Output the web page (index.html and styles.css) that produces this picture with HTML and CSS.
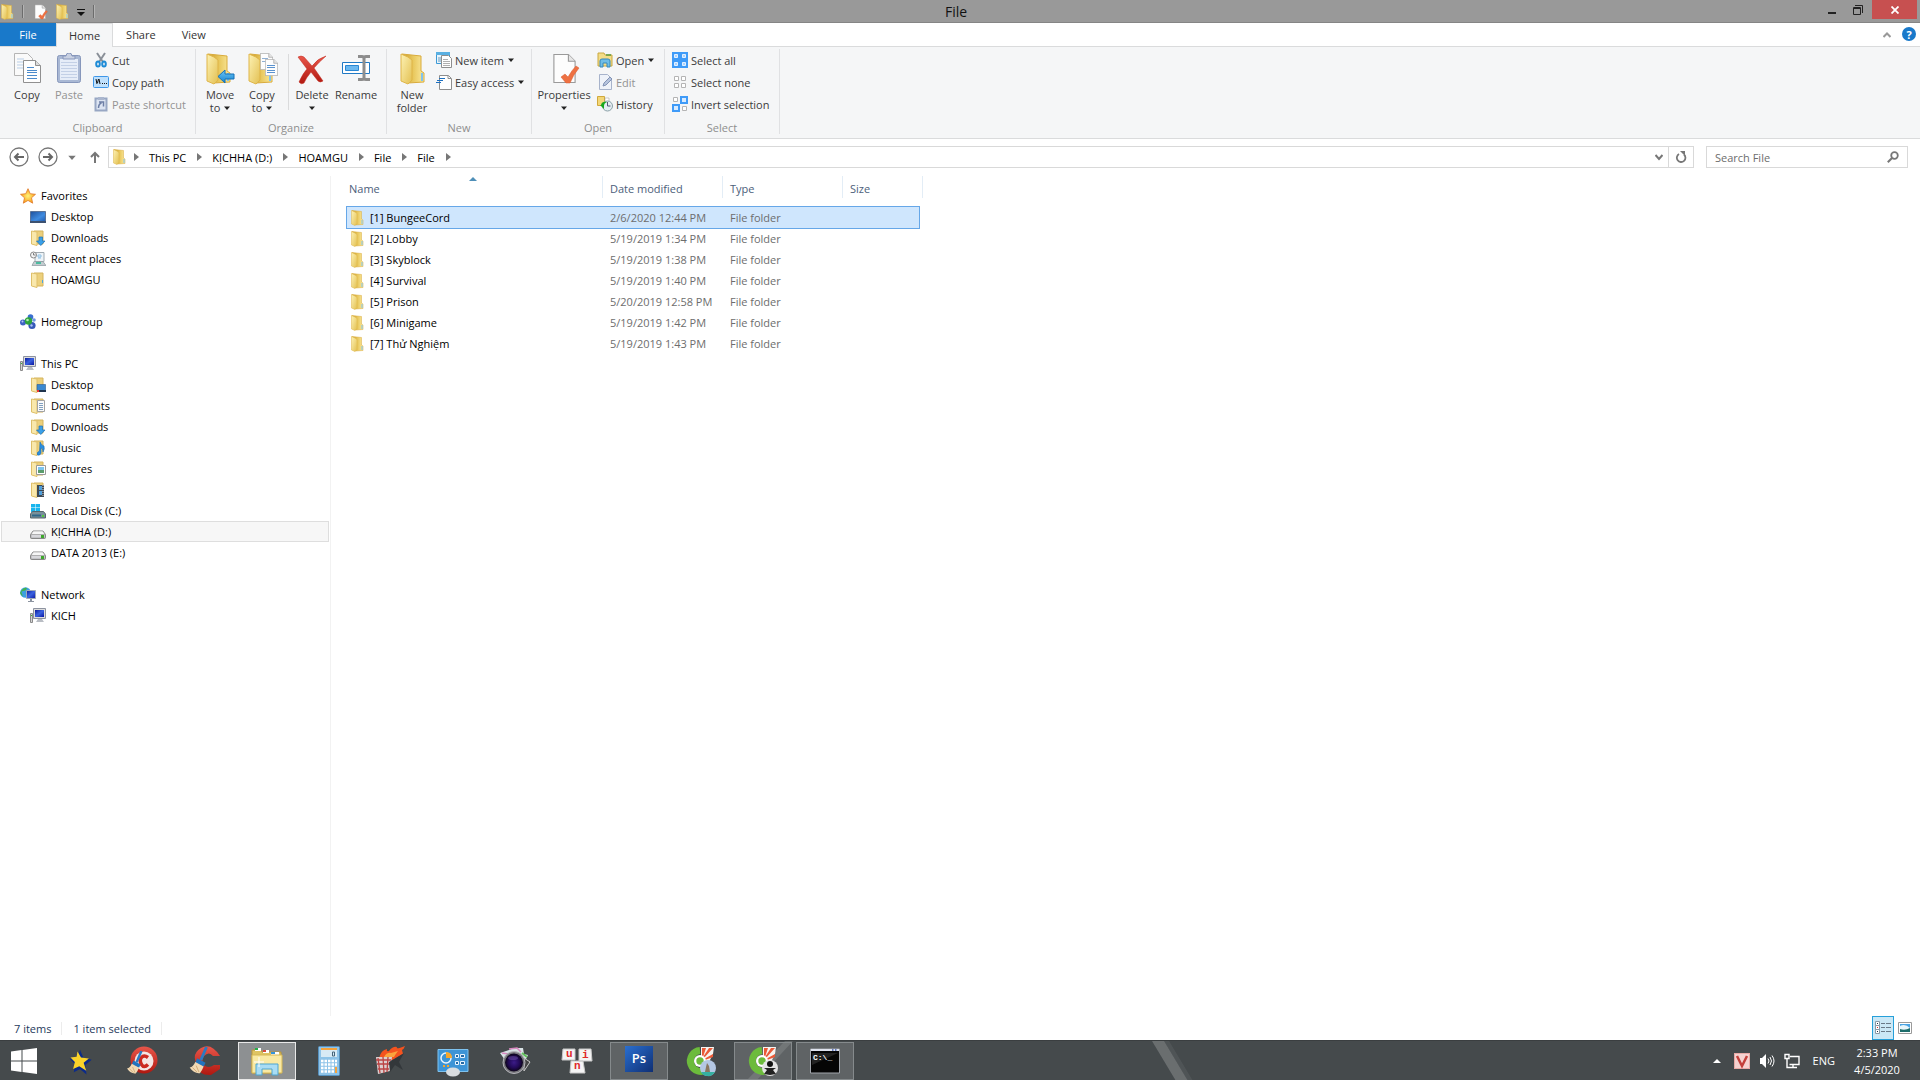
FILE: index.html
```html
<!DOCTYPE html>
<html lang="en">
<head>
<meta charset="utf-8">
<title>File</title>
<link rel="stylesheet" href="styles.css">
</head>
<body>
<svg class="sprite" width="0" height="0" aria-hidden="true">
  <defs>
    <linearGradient id="gFront" x1="0" y1="0" x2="1" y2="1"><stop offset="0" stop-color="#fdf2b4"/><stop offset="1" stop-color="#e3c052"/></linearGradient>
    <linearGradient id="gBack" x1="0" y1="0" x2="1" y2="0"><stop offset="0" stop-color="#c99a28"/><stop offset=".5" stop-color="#e8c75c"/><stop offset="1" stop-color="#fbe99c"/></linearGradient>
    <linearGradient id="gBlue" x1="0" y1="0" x2="0" y2="1"><stop offset="0" stop-color="#6cc6f5"/><stop offset="1" stop-color="#1583d0"/></linearGradient>
    <linearGradient id="gScreen" x1="0" y1="0" x2="1" y2="1"><stop offset="0" stop-color="#0a1a9c"/><stop offset=".5" stop-color="#3a62e0"/><stop offset="1" stop-color="#0b16a0"/></linearGradient>
    <linearGradient id="gDesk" x1="0" y1="0" x2="1" y2="1"><stop offset="0" stop-color="#1d4f9c"/><stop offset=".6" stop-color="#3f8be0"/><stop offset="1" stop-color="#1f5bb0"/></linearGradient>
    <linearGradient id="gGrey" x1="0" y1="0" x2="0" y2="1"><stop offset="0" stop-color="#f4f4f4"/><stop offset="1" stop-color="#a9a9a9"/></linearGradient>
    <linearGradient id="gRed" x1="0" y1="0" x2="0" y2="1"><stop offset="0" stop-color="#e8564a"/><stop offset="1" stop-color="#b01810"/></linearGradient>
    <linearGradient id="gPs" x1="0" y1="0" x2="1" y2="1"><stop offset="0" stop-color="#2a6fd0"/><stop offset="1" stop-color="#0f2f74"/></linearGradient>
    <radialGradient id="gLens"><stop offset="0" stop-color="#3c1c88"/><stop offset=".6" stop-color="#220a58"/><stop offset="1" stop-color="#0c0418"/></radialGradient>
    <radialGradient id="gStar"><stop offset="0" stop-color="#fff27a"/><stop offset="1" stop-color="#f9a01b"/></radialGradient>

    <symbol id="folder" viewBox="0 0 26 32">
      <path d="M2 1 21 3V18l3 2v9L8 30z" fill="url(#gBack)" stroke="#d9ab3c"/>
      <path d="M21 20h2v8h-2z" fill="#7fc3f0"/>
      <path d="M1 1 8 4l4 3v20l-4 4-7-3z" fill="url(#gFront)" stroke="#dfb548"/>
    </symbol>
    <symbol id="subfolder" viewBox="0 0 16 16">
      <path d="M4 1h9v13H4z" fill="#ecd07c" stroke="#d5b45c"/>
      <path d="M1.500 1 7 2v13.500L1.500 14z" fill="#f9e8ac" stroke="#dfc06a"/>
    </symbol>
    <symbol id="page" viewBox="0 0 20 26">
      <path d="M.5.5h13l6 6v19H.5z" fill="#fdfdfd" stroke="#9a9a9a"/><path d="M13.500.5v6h6" fill="#e6e6e6" stroke="#9a9a9a"/>
    </symbol>
    <symbol id="caret" viewBox="0 0 6 4"><path d="M0 .5h6L3 4z"/></symbol>
    <symbol id="crumb" viewBox="0 0 5 8"><path d="M0 0v8l5-4z" fill="#777"/></symbol>

    <symbol id="i-copy" viewBox="0 0 32 32">
      <path d="M3.500.5h13l5 5v17h-18z" fill="#fafafa" stroke="#b5b5b5"/>
      <path d="M6 6h7M6 9h6M6 12h6M6 15h6" stroke="#b9cfe8"/>
      <path d="M12.500 7.500h12l5 5v17h-17z" fill="#fefefe" stroke="#909090"/><path d="M24.500 7.500v5h5" fill="#ddd" stroke="#909090"/>
      <path d="M16 14.500h7M16 17.500h10M16 19.500h10M16 22.500h10M16 25.500h10" stroke="#4b8acb"/>
    </symbol>
    <symbol id="i-paste" viewBox="0 0 32 32">
      <rect x="4.500" y="2.500" width="23" height="27" rx="2" fill="#a9b8d4" stroke="#8797bb"/>
      <path d="M7 6h18v21H7z" fill="#e6edf8"/><path d="M8 9.500h16M8 12.500h16M8 15.500h16M8 18.500h16M8 21.500h16M8 24.500h16" stroke="#c3d0e6"/>
      <path d="M10 6V3h3q0-3 3-3t3 3h3v3z" fill="#c9d1e2" stroke="#8797bb"/>
    </symbol>
    <symbol id="i-move" viewBox="0 0 32 32">
      <use href="#folder" width="26" height="32" x="2"/>
      <path d="M14 23.500 21 17v4h9v5h-9v4z" fill="url(#gBlue)" stroke="#1470b8"/>
    </symbol>
    <symbol id="i-copyto" viewBox="0 0 32 32">
      <use href="#folder" width="26" height="32" x="2"/>
      <use href="#page" x="14" y="0" width="13" height="17"/><path d="M16 5.500h6M16 8.500h5" stroke="#8fb0d4"/>
      <use href="#page" x="19" y="6" width="13" height="17"/><path d="M21 12.500h8M21 14.500h8M21 17.500h8M21 19.500h8" stroke="#5b93cf"/>
    </symbol>
    <symbol id="i-delete" viewBox="0 0 32 32">
      <path d="M2 4q3-2 6 0l8 9Q22 5 30 3 23 9 18 15l9 13q-3 2-5 0l-7-9q-5 6-7 11-3 2-5-1 4-9 8-13z" fill="url(#gRed)" stroke="#c0281c" stroke-width=".5"/>
    </symbol>
    <symbol id="i-rename" viewBox="0 0 32 32">
      <path d="M2.500 9.500h27v11h-27z" fill="#fff" stroke="#2079c4"/><path d="M5.500 12.500h13v5h-13z" fill="#6bb8f0" stroke="#2a86d2"/>
      <path d="M18 3.500h4q2 0 2 2v19q0 2 2 2h4M30 3.500h-4q-2 0-2 2M24 24.500q0 2-2 2h-4" fill="none" stroke="#8d8d8d" stroke-width="3"/>
    </symbol>
    <symbol id="i-newfolder" viewBox="0 0 32 32"><use href="#folder" width="26" height="32" x="4"/></symbol>
    <symbol id="i-props" viewBox="0 0 32 32">
      <use href="#page" x="5" y="1" width="23" height="29"/>
      <path d="M13 24l4-3 3 3q4-7 8-11l3 2q-6 7-9 15h-4z" fill="#ee7142" stroke="#d85a30" stroke-width=".5"/>
    </symbol>
    <symbol id="i-cut" viewBox="0 0 16 16">
      <path d="M4 1l6 9M12 1 6 10" stroke="#8a9098" stroke-width="2"/>
      <ellipse cx="5" cy="12" rx="1.800" ry="2.500" fill="none" stroke="#1e8bd6" stroke-width="2"/><ellipse cx="11" cy="12" rx="1.800" ry="2.500" fill="none" stroke="#1e8bd6" stroke-width="2"/>
    </symbol>
    <symbol id="i-path" viewBox="0 0 16 16">
      <rect x=".5" y="2.500" width="15" height="11" rx="1" fill="#bfe0fc" stroke="#3f97e8"/><path d="M3 5l1 5M6 5l1 5M4.500 9l1-4" stroke="#111" fill="none"/><path d="M9 9h1v1H9zM11 9h1v1h-1zM13 9h1v1h-1z" fill="#111"/>
    </symbol>
    <symbol id="i-shortcut" viewBox="0 0 16 16">
      <path d="M2.500 2.500h11v12h-11z" fill="#dce4f2" stroke="#98a7c4" stroke-width="2"/><path d="M5 1h6v3H5z" fill="#aab6ce"/><path d="M5.500 12q0-4 3-5M6 6h4.500v4.500" fill="none" stroke="#6d7fa6" stroke-width="1.500"/>
    </symbol>
    <symbol id="i-newitem" viewBox="0 0 16 16">
      <path d="M.5.5h13v11H.5z" fill="#e8f4fc" stroke="#3c9ad6"/><path d="M0 0h14v3H0z" fill="#5ab0e2"/><path d="M2 5h3v5H2z" fill="#a9c8dc"/>
      <path d="M5.500 3.500h7l3 3v9h-10z" fill="#fff" stroke="#8e8e8e"/><path d="M7 7.500h5M7 9.500h7M7 11.500h7M7 13.500h7" stroke="#b0b0b0"/>
    </symbol>
    <symbol id="i-easy" viewBox="0 0 16 16">
      <path d="M3.500 1.500h9l3 3v11h-12z" fill="#fff" stroke="#8e8e8e"/><path d="M12 1.500v3h3" fill="none" stroke="#8e8e8e"/><path d="M3 4.500h6M1 6.500h6M0 8.500h5" stroke="#1c6fc0"/>
    </symbol>
    <symbol id="i-open" viewBox="0 0 16 16">
      <path d="M1 1h6l1 2h7v11H1z" fill="#f3dc86" stroke="#c9a840"/><path d="M9 3h5" stroke="#5a9a40" stroke-width="1.500"/>
      <path d="M3 15V9q0-2 2-2h6q2 0 2 2v6h-3v-4H6v4z" fill="#6fbde6" stroke="#3488bc"/>
    </symbol>
    <symbol id="i-edit" viewBox="0 0 16 16">
      <path d="M2.500.5h8l4 4v11h-12z" fill="#eef2f9" stroke="#a7b3cb"/><path d="M6 12l1-3 6-6 2 2-6 6z" fill="#b5c3dd" stroke="#8293b6"/>
    </symbol>
    <symbol id="i-history" viewBox="0 0 16 16">
      <path d="M.5.5h7v9h-7z" fill="#f3d778" stroke="#d0a83c"/><path d="M8 2h4v4H8z" fill="#fff" stroke="#999" stroke-width=".5"/>
      <circle cx="10.500" cy="10" r="5" fill="#e4eef2" stroke="#8aa0a8"/><path d="M10.500 6v4h3" fill="none" stroke="#557"/>
      <path d="M3 9l4 4v-3q0-3 3-4-5-1-6 3z" fill="#18a81e"/>
    </symbol>
    <symbol id="i-all" viewBox="0 0 16 16">
      <path d="M0 0h16v16H0z" fill="#3f9bf8"/><path d="M2.500 2.500h3v3h-3zM10.500 2.500h3v3h-3zM2.500 10.500h3v3h-3zM10.500 10.500h3v3h-3z" fill="#a9d2ff" stroke="#e4f1ff"/>
    </symbol>
    <symbol id="i-none" viewBox="0 0 16 16">
      <path d="M2.500 2.500h4v4h-4zM9.500 2.500h4v4h-4zM2.500 9.500h4v4h-4zM9.500 9.500h4v4h-4z" fill="#fff" stroke="#b4b4b4"/>
    </symbol>
    <symbol id="i-invert" viewBox="0 0 16 16">
      <path d="M1.500 1.500h4v4h-4zM10.500 10.500h4v4h-4z" fill="#fff" stroke="#b4b4b4"/><path d="M9 1h6v6H9zM1 9h6v6H1z" fill="#d8ebff" stroke="#3f9bf8" stroke-width="2"/>
    </symbol>

    <symbol id="n-star" viewBox="0 0 16 16"><path d="M8 .7l2.200 5 5.300.6-4 3.500 1.200 5.400L8 12.400l-4.700 2.800 1.200-5.400-4-3.500 5.300-.6z" fill="url(#gStar)" stroke="#e0782a" stroke-width=".8"/></symbol>
    <symbol id="n-desktop" viewBox="0 0 16 16"><path d="M.5 2.500h15v10H.5z" fill="url(#gDesk)" stroke="#5b7398"/><path d="M0 12h16v2H0z" fill="#3c5170"/></symbol>
    <symbol id="n-down" viewBox="0 0 16 16"><use href="#subfolder" width="16" height="16"/><path d="M9 7h3.500v4H15l-4.200 4.500L6.500 11H9z" fill="#3aa0e8" stroke="#1f70b4" stroke-width=".7"/></symbol>
    <symbol id="n-recent" viewBox="0 0 16 16"><path d="M5 1.500h9v9H5z" fill="#eef4f8" stroke="#a0aab0"/><path d="M8 4h3v2H8zM8 7h3" fill="none" stroke="#8fc0e4"/><path d="M2 14.500l2-4h9l3 4z" fill="#c3ccd0" stroke="#8b979c" stroke-width=".7"/><path d="M6 11h5v2H6z" fill="#4dbca0"/><circle cx="3.500" cy="4" r="3" fill="#f4f4f4" stroke="#888"/><path d="M3.500 2v2h2" fill="none" stroke="#555" stroke-width=".7"/></symbol>
    <symbol id="n-folder" viewBox="0 0 16 16"><use href="#subfolder" width="16" height="16"/><path d="M12 8h1v3h-1z" fill="#4aa7e0"/></symbol>
    <symbol id="n-home" viewBox="0 0 16 16"><circle cx="10.500" cy="3" r="2.800" fill="#3a6fd0"/><circle cx="3" cy="8.500" r="3" fill="#3f62c4"/><circle cx="12" cy="11.500" r="3.600" fill="#3558b8"/><circle cx="14" cy="6" r="1.800" fill="#6f97e0"/><circle cx="8.500" cy="7" r="3.700" fill="#2ea53c"/><circle cx="7.500" cy="6" r="1.300" fill="#b4ecb4"/><circle cx="2.500" cy="7.500" r="1" fill="#b5c8f5"/><circle cx="11.500" cy="11.500" r="1.200" fill="#a8c0f0"/></symbol>
    <symbol id="n-pc" viewBox="0 0 16 16"><path d="M3.500.5h12v10h-12z" fill="#ddd" stroke="#8d93a0"/><path d="M5 2h9v7H5z" fill="url(#gScreen)"/><path d="M8 11h4l2 3H6z" fill="#b9bdc4"/><path d="M.5 5.500h2v9h-2z" fill="#d5d5d5" stroke="#8a8a8a"/><path d="M1 7h1v1H1z" fill="#3b3"/></symbol>
    <symbol id="n-fdesk" viewBox="0 0 16 16"><use href="#subfolder" width="16" height="16"/><path d="M7 7.500h8.500v6H7z" fill="#3a88d0" stroke="#2a5a90" stroke-width=".6"/><path d="M7 13h9v2H7z" fill="#20344c"/><path d="M7 13h2v2H7z" fill="#e33"/></symbol>
    <symbol id="n-docs" viewBox="0 0 16 16"><use href="#subfolder" width="16" height="16"/><path d="M7.500 2.500h7v11h-7z" fill="#fafafa" stroke="#a3a3a3"/><path d="M9 5.500h4M9 7.500h4M9 9.500h4M9 11.500h4" stroke="#7f9fc0"/></symbol>
    <symbol id="n-music" viewBox="0 0 16 16"><use href="#subfolder" width="16" height="16"/><path d="M10 2q1 3 4 4 1 3-1 6 0-4-2-4v5q-1 3-3.500 2-1-3 2-4z" fill="#2a8ee0" stroke="#1b6db4" stroke-width=".6"/></symbol>
    <symbol id="n-pics" viewBox="0 0 16 16"><use href="#subfolder" width="16" height="16"/><path d="M6.500 4.500h9v9h-9z" fill="#fff" stroke="#9a9a9a"/><path d="M8 6h6v3H8z" fill="#7cc4ee"/><path d="M8 9h6v3H8z" fill="#5b9c6c"/></symbol>
    <symbol id="n-video" viewBox="0 0 16 16"><use href="#subfolder" width="16" height="16"/><path d="M7 3h7v12H7z" fill="#3d4854"/><path d="M9 4h3v4H9zM9 9h3v4H9z" fill="#4f9fdc"/><path d="M13 3v12" stroke="#ddd" stroke-dasharray="1"/></symbol>
    <symbol id="n-cdrive" viewBox="0 0 16 16"><path d="M1 1h4v3.500H1zM5.500 1H10v3.500H5.500zM1 5h4v4H1zM5.500 5H10v4H5.500z" fill="#17b5ee"/><path d="M.5 11l2-2.500h11l2 2.500v4H.5z" fill="#78909a" stroke="#56656c"/><path d="M2 11.500h9v2H2z" fill="#2f6688"/><path d="M12 12h2v2h-2z" fill="#50c83c"/></symbol>
    <symbol id="n-drive" viewBox="0 0 16 16"><path d="M.5 10.500 3 7h10l2.500 3.500v3q0 1-1 1h-13q-1 0-1-1z" fill="url(#gGrey)" stroke="#888"/><path d="M3.500 7.500h9l1.500 2.500H2z" fill="#f6f6f6"/><path d="M1 10.500h14v3.500H1z" fill="#d8d8dc" stroke="#888" stroke-width=".5"/><path d="M11 11h3v3h-3z" fill="#3ea82c"/></symbol>
    <symbol id="n-net" viewBox="0 0 16 16"><circle cx="5.500" cy="5.500" r="5.300" fill="#3d9fe0"/><path d="M1 4q3-4 6-3-1 3-4 3t0 5q-2 0-3-3zM6 5l3 1v4l-3 1z" fill="#44b449"/><path d="M6.500 3.500h9v8h-9z" fill="url(#gScreen)" stroke="#a0aab8"/><path d="M10 12h2v2h2v1H8v-1h2z" fill="#8c94a0"/></symbol>

    <symbol id="t-win" viewBox="0 0 32 32"><path d="M3 6.500 13.500 5v10.500H3zM14.500 4.900 29 3v12.500H14.500zM3 16.500h10.500V27L3 25.500zM14.500 16.500H29V29l-14.500-1.900z" fill="#fff"/></symbol>
    <symbol id="t-star" viewBox="0 0 32 32"><path d="M15 6l3 7 8 2-6 5 1 9-6-5-6 3 1-8-5-5 8-2z" fill="#0b2b8a" stroke="#0b2b8a" stroke-width="2"/><path d="M12 5l4 7 9 1-6 5 3 9-8-5-7 3 2-8-5-5 7-1z" fill="#fbd32a"/></symbol>
    <symbol id="broom" viewBox="0 0 20 30"><path d="M18 0l-6 14" stroke="#2a7bc4" stroke-width="3"/><path d="M8 12l9 5-2 4-9-4z" fill="#2373be"/><path d="M6 16l9 5q-2 5-4 7-6 1-11-6 4-1 6-6z" fill="#f1d9b4"/><path d="M3 22l5 5M7 20l3 7" stroke="#cfa974"/></symbol>
    <symbol id="t-cc1" viewBox="0 0 32 32"><circle cx="17" cy="15" r="13.500" fill="url(#gRed)"/><circle cx="17" cy="16" r="9.500" fill="#f4e6e4"/><path d="M21 12.500q-4-3-6.500 0t0 7 6.500 0" fill="none" stroke="#cc2a20" stroke-width="3.500"/><use href="#broom" x="0" y="6" width="16" height="24"/></symbol>
    <symbol id="t-cc2" viewBox="0 0 32 32"><path d="M31 11Q22-3 12 3T8 20q2 11 14 10l9-6v-4h-6q-6 4-10 0-3-5 0-9 5-5 9 0h7z" fill="url(#gRed)"/><use href="#broom" x="0" y="2" width="20" height="28"/></symbol>
    <symbol id="t-explorer" viewBox="0 0 32 32"><path d="M1 5h9l1 2h19v21H1z" fill="#dfc463" stroke="#b9963a"/><path d="M4 3h6v3H4zM12 5h6v3h-6zM20 7h8v3h-8z" fill="#fff"/><path d="M4 3h3v2H4z" fill="#25b04a"/><path d="M12 5h3v2h-3z" fill="#d94b3a"/><path d="M20 7h4v2h-4z" fill="#3392dc"/><path d="M1 10h30v18H1z" fill="#f9e9a4" stroke="#d6b755"/><path d="M5 30V19h22v11h-6v-6H11v6z" fill="#a9dcf4" stroke="#4fa5cf"/><path d="M8 12v10M3 17h10" stroke="#fff"/></symbol>
    <symbol id="t-calc" viewBox="0 0 32 32"><rect x="5.500" y="1.500" width="21" height="29" rx="1" fill="#8ec3e8" stroke="#5590be"/><path d="M8 3h16v2H8z" fill="#f3a23c"/><path d="M8 5h16v7H8z" fill="#d8eaf5"/><path d="M19.500 7h2v4h-2z" fill="none" stroke="#46647a"/><path d="M8 16h16M8 19.500h16M8 23h16M8 26.500h16" stroke="#fff" stroke-width="2.500" stroke-dasharray="2.500 1"/><path d="M22 22h2v6h-2z" fill="#f3a23c"/></symbol>
    <symbol id="t-fire" viewBox="0 0 32 32"><path d="M4 13q2-8 8-9-1 3 2 2 4-5 8-4-2 3 8-1-1 3-3 4l1 4-10 6z" fill="#f4531f"/><path d="M9 12q3-5 7-4l7-2q-3 4-4 6z" fill="#fba33c"/><path d="M1 12h16l-2 14-12 3z" fill="#dccfcf"/><path d="M3 13l2 15M8 12l1 16M13 12l-1 15M1 15h15M2 19h13M3 24h11" stroke="#b44" stroke-width="1.300"/><path d="M14 17l15-9-5 9 4 8-8-5-5 7z" fill="#33373a"/></symbol>
    <symbol id="t-panel" viewBox="0 0 32 32"><path d="M1 4.500h30v22H1z" fill="#3d94d6" stroke="#7ec2ee"/><circle cx="9" cy="13" r="5" fill="none" stroke="#e8f5ff" stroke-width="1.500"/><path d="M9 13V7q6 0 6 6z" fill="#f6a62c"/><path d="M18.500 9.500h3v3h-3zM23.500 9.500h4v3h-4zM18.500 16.500h3v3h-3zM23.500 16.500h4v3h-4z" fill="#2469a4" stroke="#e8f5ff"/><path d="M6 20h2v2H6zM10 20h2v2h-2z" fill="#f6a62c"/><ellipse cx="16" cy="27" rx="7" ry="4.500" fill="#d9dde0"/></symbol>
    <symbol id="t-camera" viewBox="0 0 32 32"><path d="M1 8l9-3 5-2 9 0 1 6 4 1-4 8H8z" fill="#d9e3e6"/><path d="M3 8l6 1M10 4l8-1 4 4" stroke="#d88ac0" stroke-width="1.500" fill="none"/><path d="M23 8l5 4" stroke="#61c05a" stroke-width="2"/><path d="M25 13l6 4-6 9z" fill="#444" stroke="#c8c8c8"/><circle cx="15" cy="17.500" r="11" fill="#77777c" stroke="#b5b5ba"/><circle cx="15" cy="17.500" r="9" fill="url(#gLens)"/><ellipse cx="14" cy="13" rx="5" ry="2" fill="#8563c0" opacity=".4"/></symbol>
    <symbol id="t-uni" viewBox="0 0 32 32"><g fill="#f4f4f4" stroke="#c8c8c8"><path d="M2 4h12v11H1zM18 4h12l1 12H18zM10 16h12l2 12H9z"/></g><g fill="#e02a2a" font-family="Liberation Mono" font-weight="bold" font-size="11"><text x="5" y="12">u</text><text x="21" y="13">i</text><text x="13" y="24">n</text></g></symbol>
    <symbol id="t-ps" viewBox="0 0 32 32"><path d="M2 1h28v26H2z" fill="url(#gPs)"/><text x="16" y="18" fill="#fff" font-family="Open Sans" font-weight="600" font-size="13" text-anchor="middle">Ps</text></symbol>
    <symbol id="coccoc" viewBox="0 0 32 32">
      <path d="M16 2h13l-1 7-4 8-8-2z" fill="#f6f4f0"/>
      <path d="M15 5.500a10.500 10.500 0 1 0 7 19" fill="none" stroke="#6cbb3c" stroke-width="7"/>
      <path d="M17 3h4l-3 9h-1zM28 3l-9 10-1-1 6-9zM28 9v3l-8 3-1-1z" fill="#ea5a38"/>
      <circle cx="15" cy="16" r="6" fill="#fff"/><circle cx="15" cy="16" r="3.700" fill="#6cbb3c"/>
    </symbol>
    <symbol id="t-coc1" viewBox="0 0 32 32"><use href="#coccoc" width="32" height="32"/><circle cx="23" cy="23" r="8" fill="#b4c8e4"/><path d="M16 27h14q-3 5-8 4-4 0-6-4z" fill="#35b0a2"/><path d="M22 18l2 3 1 6h-5l1-5z" fill="#8a7760"/></symbol>
    <symbol id="t-coc2" viewBox="0 0 32 32"><use href="#coccoc" width="32" height="32"/><circle cx="23" cy="23" r="8" fill="#e4e4e4"/><circle cx="23" cy="19" r="3" fill="#111"/><path d="M17 23h12l-3 2 3 4-6 1-6-1 3-4z" fill="#222"/></symbol>
    <symbol id="t-cmd" viewBox="0 0 32 32"><path d="M1.500 4h29v24h-29z" fill="#050505" stroke="#a2a6ac"/><path d="M2 4h28v2H2z" fill="#dfe3ee"/><path d="M23 5h1.500M26 5h1.500" stroke="#3a57b0" stroke-width="1.500"/><path d="M3 8h26L3 20z" fill="#222"/><text x="4" y="15" fill="#fff" font-family="Liberation Mono" font-weight="bold" font-size="8">C:\_</text></symbol>
  </defs>
</svg>

<div class="window">
  <header class="titlebar">
    <div class="quick">
      <svg width="13" height="16"><use href="#folder"/></svg>
      <span class="bar"></span>
      <button aria-label="Properties"><svg width="16" height="16"><use href="#i-props"/></svg></button>
      <button aria-label="New folder"><svg width="13" height="16"><use href="#folder"/></svg></button>
      <button aria-label="Customize"><svg width="8" height="8" viewBox="0 0 8 8"><path d="M0 1h8v1H0zM0 4h8L4 8z" fill="#111"/></svg></button>
      <span class="bar"></span>
    </div>
    <h1>File</h1>
    <div class="controls">
      <button aria-label="Minimize"><svg width="10" height="12"><path d="M1 8h8v2H1z" fill="#222"/></svg></button>
      <button aria-label="Restore"><svg width="12" height="12" viewBox="0 0 12 12"><path d="M1.500 3.500h7v7h-7zM1 4.500h7M3 1.500h7.500V9" fill="none" stroke="#222"/></svg></button>
      <button class="close" aria-label="Close"><svg width="8" height="8" viewBox="0 0 8 8"><path d="M.5.5l7 7M7.500.5l-7 7" stroke="#fff" stroke-width="1.800"/></svg></button>
    </div>
  </header>

  <nav class="tabs">
    <button class="file">File</button>
    <button class="active">Home</button>
    <button>Share</button>
    <button>View</button>
    <span class="spacer"></span>
    <button class="tool" aria-label="Collapse"><svg width="8" height="6" viewBox="0 0 8 6"><path d="M.5 5 4 1.500 7.500 5" fill="none" stroke="#999" stroke-width="2"/></svg></button>
    <button class="help" aria-label="Help">?</button>
  </nav>

  <section class="ribbon">
    <div class="group clipboard">
      <div class="tools">
        <button class="big"><svg><use href="#i-copy"/></svg>Copy</button>
        <button class="big" disabled><svg><use href="#i-paste"/></svg>Paste</button>
        <div class="stack">
          <button><svg><use href="#i-cut"/></svg>Cut</button>
          <button><svg><use href="#i-path"/></svg>Copy path</button>
          <button disabled><svg><use href="#i-shortcut"/></svg>Paste shortcut</button>
        </div>
      </div>
      <h2>Clipboard</h2>
    </div>
    <div class="group organize">
      <div class="tools">
        <button class="big"><svg><use href="#i-move"/></svg>Move<span>to <svg class="caret"><use href="#caret"/></svg></span></button>
        <button class="big"><svg><use href="#i-copyto"/></svg>Copy<span>to <svg class="caret"><use href="#caret"/></svg></span></button>
        <span class="divider"></span>
        <button class="big"><svg><use href="#i-delete"/></svg>Delete<span><svg class="caret"><use href="#caret"/></svg></span></button>
        <button class="big"><svg><use href="#i-rename"/></svg>Rename</button>
      </div>
      <h2>Organize</h2>
    </div>
    <div class="group new">
      <div class="tools">
        <button class="big"><svg><use href="#i-newfolder"/></svg>New<span>folder</span></button>
        <div class="stack">
          <button><svg><use href="#i-newitem"/></svg>New item<svg class="caret"><use href="#caret"/></svg></button>
          <button><svg><use href="#i-easy"/></svg>Easy access<svg class="caret"><use href="#caret"/></svg></button>
        </div>
      </div>
      <h2>New</h2>
    </div>
    <div class="group open">
      <div class="tools">
        <button class="big wide"><svg><use href="#i-props"/></svg>Properties<span><svg class="caret"><use href="#caret"/></svg></span></button>
        <div class="stack">
          <button><svg><use href="#i-open"/></svg>Open<svg class="caret"><use href="#caret"/></svg></button>
          <button disabled><svg><use href="#i-edit"/></svg>Edit</button>
          <button><svg><use href="#i-history"/></svg>History</button>
        </div>
      </div>
      <h2>Open</h2>
    </div>
    <div class="group select">
      <div class="tools">
        <div class="stack">
          <button><svg><use href="#i-all"/></svg>Select all</button>
          <button><svg><use href="#i-none"/></svg>Select none</button>
          <button><svg><use href="#i-invert"/></svg>Invert selection</button>
        </div>
      </div>
      <h2>Select</h2>
    </div>
  </section>

  <div class="navbar">
    <button aria-label="Back"><svg width="20" height="20" viewBox="0 0 20 20"><circle cx="10" cy="10" r="9" fill="none" stroke="#777" stroke-width="1.300"/><path d="M15 10H6M9.500 6.500 6 10l3.500 3.500" fill="none" stroke="#666" stroke-width="2"/></svg></button>
    <button aria-label="Forward"><svg width="20" height="20" viewBox="0 0 20 20"><circle cx="10" cy="10" r="9" fill="none" stroke="#777" stroke-width="1.300"/><path d="M5 10h9M10.500 6.500 14 10l-3.500 3.500" fill="none" stroke="#666" stroke-width="2"/></svg></button>
    <button aria-label="Recent locations"><svg class="caret grey"><use href="#caret"/></svg></button>
    <button aria-label="Up"><svg width="10" height="12" viewBox="0 0 10 12"><path d="M5 12V2M1 6l4-4 4 4" fill="none" stroke="#777" stroke-width="2"/></svg></button>
    <div class="address">
      <svg width="13" height="16"><use href="#folder"/></svg>
      <svg class="sep"><use href="#crumb"/></svg>
      <a href="#pc">This PC</a><svg class="sep"><use href="#crumb"/></svg>
      <a href="#d">KỊCHHA (D:)</a><svg class="sep"><use href="#crumb"/></svg>
      <a href="#hoamgu">HOAMGU</a><svg class="sep"><use href="#crumb"/></svg>
      <a href="#file">File</a><svg class="sep"><use href="#crumb"/></svg>
      <a href="#file2">File</a><svg class="sep"><use href="#crumb"/></svg>
      <span class="spacer"></span>
      <button aria-label="Previous locations"><svg width="8" height="7" viewBox="0 0 8 7"><path d="M.5 1 4 5 7.500 1" fill="none" stroke="#777" stroke-width="2"/></svg></button>
      <button class="refresh" aria-label="Refresh"><svg width="12" height="12" viewBox="0 0 12 12"><path d="M9 3.500A4.300 4.300 0 1 1 4 3" fill="none" stroke="#777" stroke-width="1.800"/><path d="M5 0h5v5z" fill="#777"/></svg></button>
    </div>
    <div class="search">
      <input type="text" placeholder="Search File" aria-label="Search File">
      <svg width="12" height="12" viewBox="0 0 12 12"><circle cx="7.500" cy="4.500" r="3.300" fill="none" stroke="#777" stroke-width="1.800"/><path d="M5 7 .8 11.200" stroke="#777" stroke-width="2"/></svg>
    </div>
  </div>

  <main class="content">
    <nav class="tree">
      <section>
        <a class="root" href="#fav"><svg><use href="#n-star"/></svg>Favorites</a>
        <a href="#desktop"><svg><use href="#n-desktop"/></svg>Desktop</a>
        <a href="#downloads"><svg><use href="#n-down"/></svg>Downloads</a>
        <a href="#recent"><svg><use href="#n-recent"/></svg>Recent places</a>
        <a href="#hoamgu"><svg><use href="#n-folder"/></svg>HOAMGU</a>
      </section>
      <section>
        <a class="root" href="#homegroup"><svg><use href="#n-home"/></svg>Homegroup</a>
      </section>
      <section>
        <a class="root" href="#pc"><svg><use href="#n-pc"/></svg>This PC</a>
        <a href="#pc-desktop"><svg><use href="#n-fdesk"/></svg>Desktop</a>
        <a href="#documents"><svg><use href="#n-docs"/></svg>Documents</a>
        <a href="#pc-downloads"><svg><use href="#n-down"/></svg>Downloads</a>
        <a href="#music"><svg><use href="#n-music"/></svg>Music</a>
        <a href="#pictures"><svg><use href="#n-pics"/></svg>Pictures</a>
        <a href="#videos"><svg><use href="#n-video"/></svg>Videos</a>
        <a href="#c"><svg><use href="#n-cdrive"/></svg>Local Disk (C:)</a>
        <a class="current" href="#d"><svg><use href="#n-drive"/></svg>KỊCHHA (D:)</a>
        <a href="#e"><svg><use href="#n-drive"/></svg>DATA 2013 (E:)</a>
      </section>
      <section>
        <a class="root" href="#network"><svg><use href="#n-net"/></svg>Network</a>
        <a href="#kich"><svg><use href="#n-pc"/></svg>KICH</a>
      </section>
    </nav>

    <div class="listing">
      <table>
        <colgroup><col class="c-name"><col class="c-mid"><col class="c-mid"><col class="c-size"></colgroup>
        <thead>
          <tr><th><span>Name<svg class="sort" width="8" height="4"><path d="M4 0l4 4H0z" fill="#4f8fb8"/></svg></span></th><th><span>Date modified</span></th><th><span>Type</span></th><th><span>Size</span></th></tr>
        </thead>
        <tbody>
          <tr class="selected"><td><svg width="13" height="16"><use href="#folder"/></svg>[1] BungeeCord</td><td>2/6/2020 12:44 PM</td><td>File folder</td><td></td></tr>
          <tr><td><svg width="13" height="16"><use href="#folder"/></svg>[2] Lobby</td><td>5/19/2019 1:34 PM</td><td>File folder</td><td></td></tr>
          <tr><td><svg width="13" height="16"><use href="#folder"/></svg>[3] Skyblock</td><td>5/19/2019 1:38 PM</td><td>File folder</td><td></td></tr>
          <tr><td><svg width="13" height="16"><use href="#folder"/></svg>[4] Survival</td><td>5/19/2019 1:40 PM</td><td>File folder</td><td></td></tr>
          <tr><td><svg width="13" height="16"><use href="#folder"/></svg>[5] Prison</td><td>5/20/2019 12:58 PM</td><td>File folder</td><td></td></tr>
          <tr><td><svg width="13" height="16"><use href="#folder"/></svg>[6] Minigame</td><td>5/19/2019 1:42 PM</td><td>File folder</td><td></td></tr>
          <tr><td><svg width="13" height="16"><use href="#folder"/></svg>[7] Thử Nghiệm</td><td>5/19/2019 1:43 PM</td><td>File folder</td><td></td></tr>
        </tbody>
      </table>
    </div>
  </main>

  <footer class="status">
    <span>7 items</span>
    <span>1 item selected</span>
    <span class="spacer"></span>
    <button class="on" aria-label="Details view"><svg width="16" height="14" viewBox="0 0 16 14"><path d="M.5.5h4v4h-4zM.5 4.500h4v4h-4zM.5 8.500h4v4h-4z" fill="#fff" stroke="#8a9aa8"/><path d="M6 2.500h4M11 2.500h5M6 6.500h4M11 6.500h5M6 10.500h4M11 10.500h5" stroke="#6a7a88"/><path d="M2 2h1v1H2zM2 10h1v1H2z" fill="#234"/><path d="M2 6h1v1H2z" fill="#d22"/></svg></button>
    <button aria-label="Thumbnail view"><svg width="14" height="12" viewBox="0 0 14 12"><path d="M.5.5h13v11H.5z" fill="#fff" stroke="#9a9a9a"/><path d="M2 2h10v8H2z" fill="#4aa4e4"/><path d="M2 4q5-3 10 2v2H2z" fill="#e8f6fc"/><path d="M2 7q5 2 10-1v4H2z" fill="#1d6d6a"/></svg></button>
  </footer>
</div>

<footer class="taskbar">
  <svg class="streaks" aria-hidden="true"><path d="M785 0h8l-37 40h-10z" fill="#fff" opacity=".12"/><path d="M1152 0h12l24 40h-12z" fill="#fff" opacity=".2"/><path d="M1164 0h5l24 40h-5z" fill="#fff" opacity=".06"/></svg>
  <button class="start" aria-label="Start"><svg><use href="#t-win"/></svg></button>
  <button aria-label="Star"><svg class="small"><use href="#t-star"/></svg></button>
  <button aria-label="Cleaner browser"><svg><use href="#t-cc1"/></svg></button>
  <button aria-label="Cleaner"><svg><use href="#t-cc2"/></svg></button>
  <button class="front" aria-label="File Explorer"><svg><use href="#t-explorer"/></svg></button>
  <button aria-label="Calculator"><svg><use href="#t-calc"/></svg></button>
  <button aria-label="Uninstaller"><svg><use href="#t-fire"/></svg></button>
  <button aria-label="Control Panel"><svg><use href="#t-panel"/></svg></button>
  <button aria-label="Photos"><svg><use href="#t-camera"/></svg></button>
  <button aria-label="Keyboard"><svg><use href="#t-uni"/></svg></button>
  <button class="running" aria-label="Photoshop"><svg><use href="#t-ps"/></svg></button>
  <button aria-label="Browser"><svg><use href="#t-coc1"/></svg></button>
  <button class="running" aria-label="Browser profile"><svg><use href="#t-coc2"/></svg></button>
  <button class="running" aria-label="Command Prompt"><svg><use href="#t-cmd"/></svg></button>
  <span class="spacer"></span>
  <div class="tray">
    <svg width="8" height="4"><path d="M4 0l4 4H0z" fill="#fff"/></svg>
    <svg width="16" height="16" viewBox="0 0 16 16"><path d="M0 0h16v16H0z" fill="#e9aaa6"/><path d="M1 1h14v14H1z" fill="#f6d2d0"/><path d="M3 3l5 10 5-10" fill="none" stroke="#c4403b" stroke-width="2.500"/></svg>
    <svg width="16" height="16" viewBox="0 0 16 16"><path d="M1 5h2l4-4v14l-4-4H1z" fill="#fff"/><path d="M9 5.500q2 2.500 0 5M11 4q3 4 0 8M13 2.500q4 5.500 0 11" fill="none" stroke="#fff"/></svg>
    <svg width="16" height="16" viewBox="0 0 16 16"><path d="M6 3.500h9v8H5.500M9 12v2.500M5 14.500h8M3 6v8.500h4M1 1.500h4v4H1z" fill="none" stroke="#fff" stroke-width="1.400"/></svg>
    <span class="lang">ENG</span>
    <time><span>2:33 PM</span><span>4/5/2020</span></time>
  </div>
</footer>
</body>
</html>
```
FILE: styles.css
```css
* { box-sizing: border-box; }

body {
  margin: 0;
  min-height: 100vh;
  display: flex;
  flex-direction: column;
  background: #fff;
  color: #111;
  font: 11px/13px "Open Sans", "Noto Sans", sans-serif;
}

button {
  padding: 0;
  border: 0;
  background: none;
  color: inherit;
  font: inherit;
  display: flex;
  align-items: center;
  justify-content: center;
}

a { color: inherit; text-decoration: none; }
h1, h2 { margin: 0; font-weight: 400; }
svg { flex: none; display: block; }
.sprite { position: absolute; }
.spacer { flex: 1; }
.caret { width: 6px; height: 4px; fill: #222; }
.caret.grey { width: 8px; height: 5px; fill: #777; }

.window { flex: 1; display: flex; flex-direction: column; }

/* Title bar */
.titlebar {
  height: 23px;
  display: grid;
  grid-template-columns: 1fr auto 1fr;
  background: #999;
  border-bottom: 1px solid #858585;
}
.titlebar h1 { font-size: 14px; line-height: 23px; padding-right: 8px; }
.quick { display: flex; align-items: center; gap: 8px; padding-left: 1px; }
.bar { width: 2px; height: 13px; background: #b4b4b4; border-left: 1px solid #6c6c6c; }
.controls { display: flex; justify-content: flex-end; gap: 15px; padding-right: 3px; }
.controls button { height: 19px; }
.controls .close { width: 45px; margin-left: -7px; background: #c75050; }

/* Tabs */
.tabs { height: 24px; display: flex; border-bottom: 1px solid #dadbdc; }
.tabs button { padding: 0 13px; color: #333; }
.tabs .file { width: 56px; background: #1979ca; color: #fff; }
.tabs .active {
  height: 24px;
  padding: 0 12px;
  background: #f5f6f7;
  border: 1px solid #dadbdc;
  border-bottom: 0;
}
.tabs .tool { padding: 0 11px; }
.tabs .help {
  width: 14px;
  height: 14px;
  margin: 4px 4px 0 0;
  padding: 0;
  border-radius: 50%;
  background: #1979ca;
  color: #fff;
  font-weight: 700;
}

/* Ribbon */
.ribbon {
  height: 92px;
  display: flex;
  background: #f5f6f7;
  border-bottom: 1px solid #dadbdc;
  color: #3b3b3b;
}
.group {
  margin: 2px 0 4px;
  padding-top: 1px;
  display: flex;
  flex-direction: column;
  border-right: 1px solid #e0e1e3;
}
.group h2 { font-size: 11px; line-height: 12px; text-align: center; color: #8e8e8e; }
.tools { flex: 1; display: flex; align-items: flex-start; }
.clipboard { width: 196px; padding: 1px 6px 0; }
.organize { width: 191px; padding: 1px 3px 0; }
.new { width: 145px; padding: 1px 4px 0; }
.open { width: 133px; padding: 1px 2px 0; }
.select { width: 115px; padding: 1px 4px 0; }
.big { width: 42px; padding-top: 3px; flex-direction: column; white-space: nowrap; }
.big > svg { width: 32px; height: 32px; margin-bottom: 3px; }
.big span { display: flex; align-items: center; justify-content: center; gap: 4px; min-height: 13px; }
.big.wide { width: 60px; }
.ribbon button:disabled { color: #939393; }
.divider { width: 1px; height: 56px; margin: 4px 1px 0 5px; background: #dadbdc; }
.divider ~ .big { width: 44px; }
.stack { margin: -1px 0 0 3px; }
.stack button { height: 22px; gap: 3px; white-space: nowrap; }
.stack button > svg:first-child { width: 16px; height: 16px; }
.stack .caret { margin-left: 1px; }

/* Address row */
.navbar { display: flex; padding: 7px 12px 8px 9px; }
.navbar > button:nth-child(2) { margin-left: 9px; }
.navbar > button:nth-child(3) { margin-left: 10px; }
.navbar > button:nth-child(4) { margin: 0 8px 0 14px; }
.address, .search { height: 22px; display: flex; align-items: center; border: 1px solid #d9d9d9; }
.address { flex: 1; padding-left: 4px; color: #000; }
.address a { padding: 0 11px 0 10px; }
.address > svg:first-child { margin-right: 8px; }
.sep { width: 5px; height: 8px; }
.address .refresh { width: 25px; height: 20px; margin-left: 5px; border-left: 1px solid #d9d9d9; }
.search { width: 202px; margin-left: 12px; padding: 0 8px; }
.search input { flex: 1; min-width: 0; padding: 0; border: 0; outline: 0; background: none; font: inherit; }
.search input::placeholder { color: #6d6d6d; opacity: 1; }

/* Body */
.content { flex: 1; display: flex; }
.tree { width: 331px; padding: 9px 1px 0; border-right: 1px solid #f2f2f2; color: #000; }
.tree section { margin-bottom: 21px; }
.tree a { height: 21px; display: flex; align-items: center; gap: 5px; padding-left: 28px; border: 1px solid transparent; }
.tree a.root { padding-left: 18px; }
.tree a svg { width: 16px; height: 16px; }
.tree a.current { background: #f7f7f7; border-color: #dedede; }

.listing { flex: 1; padding-left: 16px; }
table { table-layout: fixed; width: 572px; border-collapse: collapse; }
.c-name { width: 256px; }
.c-mid { width: 120px; }
.c-size { width: 76px; }
th, td { padding: 0; text-align: left; font-weight: 400; white-space: nowrap; }
th { height: 31px; vertical-align: top; color: #4c607a; }
th span {
  position: relative;
  display: block;
  padding-left: 7px;
  line-height: 26px;
  height: 22px;
  border-right: 1px solid #e3edf6;
}
th:first-child span { padding-left: 2px; }
th:last-child span { margin-right: -4px; }
.sort { position: absolute; top: 1px; left: 122px; }
td { height: 21px; padding-left: 7px; color: #6d6d6d; }
td:first-child { display: flex; align-items: center; gap: 6px; padding-left: 4px; color: #000; }
.selected { background: #cfe6fd; outline: 1px solid #66a7e8; }

/* Status bar */
.status { height: 24px; display: flex; align-items: center; padding: 0 8px 0 14px; color: #1e395b; }
.status span:not(.spacer) { padding-right: 10px; margin-right: 11px; border-right: 1px solid #ececec; }
.status button { height: 24px; }
.status .on { width: 22px; margin-right: 4px; background: #cbe8f6; border: 1px solid #26a0da; }

/* Taskbar */
.taskbar {
  position: relative;
  height: 40px;
  display: flex;
  align-items: center;
  gap: 4px;
  background: #454a4c;
  border-top: 1px solid #3a3e40;
  color: #fff;
}
.streaks { position: absolute; width: 100%; height: 100%; }
.taskbar button { position: relative; width: 58px; height: 38px; border: 1px solid transparent; }
.taskbar button svg { width: 32px; height: 32px; }
.taskbar button .small { width: 28px; height: 28px; }
.taskbar .start { width: 48px; }
.taskbar .running { background: rgba(255, 255, 255, .14); border-color: #858a8c; }
.taskbar .front { background: #8d9092; border-color: #e8e8e8; }
.tray { display: flex; align-items: center; gap: 9px; }
.tray > svg:first-child { margin-right: 4px; }
.lang { margin-left: 4px; }
.tray time { width: 66px; margin-right: 10px; line-height: 17px; }
.tray time span { display: block; text-align: center; }
```
